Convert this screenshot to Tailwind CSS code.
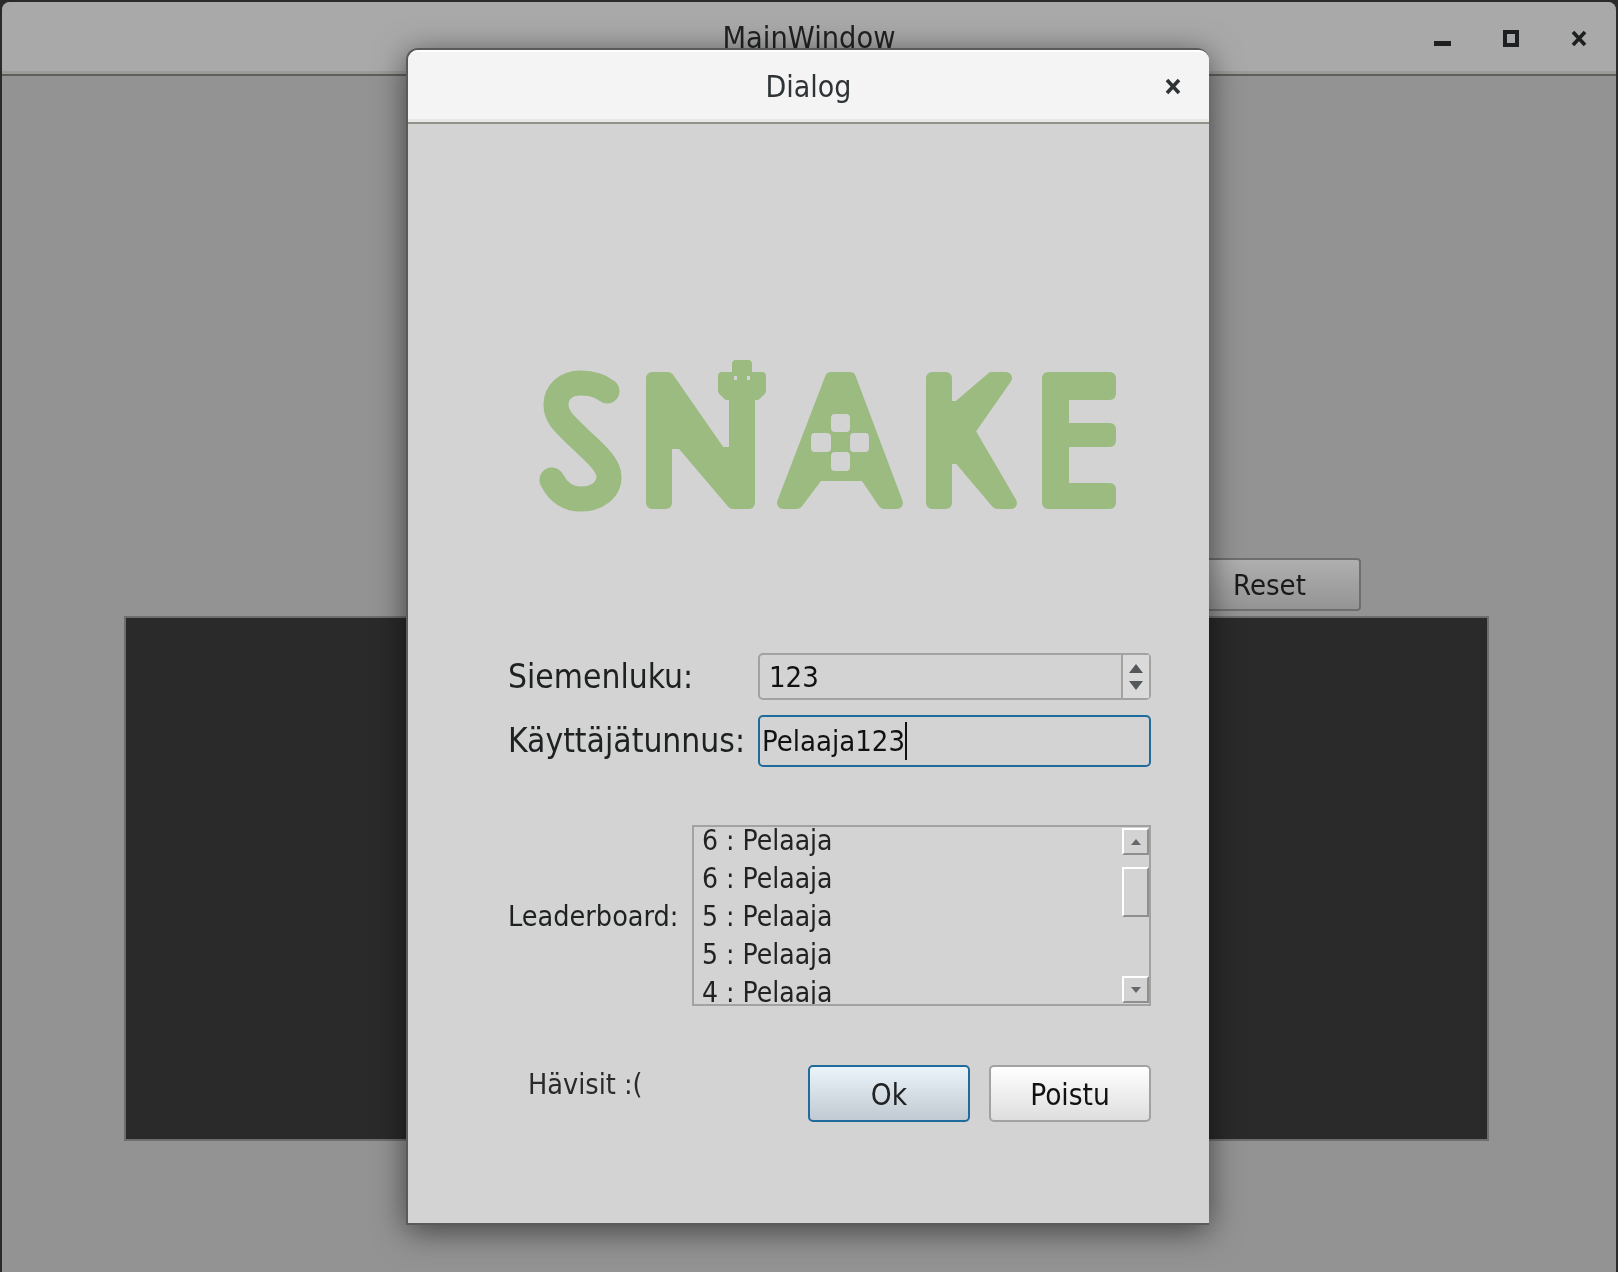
<!DOCTYPE html>
<html>
<head>
<meta charset="utf-8">
<title>Snake</title>
<script src="https://cdn.jsdelivr.net/npm/@tailwindcss/browser@4"></script>
</head>
<body class="bg-[#2a2a2a] font-['DejaVu_Sans',sans-serif] font-stretch-condensed overflow-hidden">
<div class="relative w-[1618px] h-[1272px] pl-[2px] pt-[2px] pr-[2px] overflow-hidden blur-[0.4px]">
  <!-- main window -->
  <div class="w-[1614px] h-[1270px] flex flex-col bg-[#939393] rounded-t-[8px] overflow-hidden">
    <div class="h-[72px] shrink-0 flex items-center justify-center relative bg-[#a9a9a9] border-b-[3px] border-b-[#9a9a96] shadow-[0_2px_0_#5e5e5a] text-[30.4px] text-[#1f2122]">
      <span class="pt-[2px]">MainWindow</span>
      <div class="absolute right-[29px] top-[28px] flex items-start gap-[52px]">
        <svg width="17" height="17" viewBox="0 0 17 17"><rect x="0" y="11" width="17" height="5" fill="#1d1f20"/></svg>
        <svg width="16" height="17" viewBox="0 0 16 17"><rect x="2" y="2" width="12" height="13" fill="none" stroke="#1d1f20" stroke-width="4"/></svg>
        <svg width="16" height="17" viewBox="0 0 16 17"><path d="M2 2 14 15M14 2 2 15" stroke="#1d1f20" stroke-width="3.6"/></svg>
      </div>
    </div>
    <div class="flex justify-end pt-[484px] pr-[255px]">
      <div class="w-[180px] h-[53px] flex items-center justify-center border-2 border-[#6e6e6e] rounded-[4px] bg-gradient-to-b from-[#afafaf] to-[#949494] text-[29px] text-[#1a1a1a] pr-[3px] pt-[3px]">Reset</div>
    </div>
    <div class="ml-[122px] mt-[5px] w-[1365px] h-[525px] bg-[#2a2a2a] border-2 border-[#6e6e6e]"></div>
  </div>

  <!-- dialog -->
  <div class="absolute left-[406px] top-[48px] w-[803px] h-[1177px] flex flex-col bg-[#d3d3d3] border-2 border-r-0 border-[#5a5a5a] rounded-t-[12px] shadow-[0_6px_32px_rgba(0,0,0,0.55)] text-[#1e2122]">
    <div class="h-[72px] shrink-0 relative flex items-center justify-center bg-[#f4f4f4] rounded-t-[10px] border-t-2 border-t-white border-b-[3px] border-b-[#e8e8e6] shadow-[0_2px_0_#91918a] text-[30px] text-[#2e3436]">
      <span class="pt-[1px]">Dialog</span>
      <svg class="absolute right-[28px] top-[26px]" width="16" height="17" viewBox="0 0 16 17"><path d="M2 2 14 15M14 2 2 15" stroke="#2e3436" stroke-width="3.6"/></svg>
    </div>

    <svg class="ml-[122px] mt-[233px] shrink-0" width="595" height="160" viewBox="530 355 595 160" fill="#9bbb80" stroke="#9bbb80" stroke-width="12" stroke-linejoin="round">
      <path d="M607 391C598 384 590 383 581 383C566 383 556 392 556 405C556 418 566 425 580 439C596 454 609 465 609 477C609 490 597 499 581 499C567 499 558 492 552 480" fill="none" stroke-width="25" stroke-linecap="round"/>
      <path d="M652 378H668L720 453H735V396H749V503H733L682 443H666V503H652Z"/>
      <path d="M736 364H748V376H762V391L757 396H727L722 391V376H736Z" stroke-width="8"/>
      <rect x="734" y="376" width="3" height="4" fill="#d3d3d3" stroke="none"/>
      <rect x="747" y="376" width="3" height="4" fill="#d3d3d3" stroke="none"/>
      <path d="M831 378H850L897 503H884L865 475H818L797 503H783Z"/>
      <g fill="#d3d3d3" stroke="none">
        <rect x="831" y="414" width="19" height="18" rx="4"/>
        <rect x="811" y="433" width="20" height="19" rx="4"/>
        <rect x="850" y="433" width="19" height="19" rx="4"/>
        <rect x="831" y="452" width="19" height="19" rx="4"/>
      </g>
      <path d="M932 378H946V407L958 407L992 378H1006L969 431L1011 503H997L959 458H946V503H932Z"/>
      <path d="M1048 378H1110V394H1063V429H1110V441H1063V489H1110V503H1048Z"/>
    </svg>

    <div class="flex flex-col pl-[100px] pr-[58px] mt-[138px]">
      <div class="flex items-center h-[47px]">
        <span class="w-[250px] shrink-0 text-[33.3px]">Siemenluku:</span>
        <div class="flex-1 h-full flex border-2 border-[#a2a2a0] rounded-[5px]">
          <span class="flex-1 pl-[9px] text-[29px] leading-[44px] text-[#111]">123</span>
          <div class="w-[28px] flex flex-col items-center justify-center gap-[8px] pr-[1px] border-l-2 border-l-[#a2a2a0] bg-[#dadada]">
            <svg width="14" height="9" viewBox="0 0 14 9"><path d="M7 0 14 9H0Z" fill="#55585a"/></svg>
            <svg width="14" height="9" viewBox="0 0 14 9"><path d="M0 0H14L7 9Z" fill="#55585a"/></svg>
          </div>
        </div>
      </div>
      <div class="flex items-center h-[52px] mt-[15px]">
        <span class="w-[250px] shrink-0 text-[33.3px]">Käyttäjätunnus:</span>
        <div class="flex-1 h-full flex items-center border-2 border-[#1f6b9c] rounded-[5px] pl-[2px] text-[29px] text-[#111]">
          <span class="border-r-2 border-r-[#111] leading-[38px] pr-0">Pelaaja123</span>
        </div>
      </div>

      <div class="flex items-center h-[181px] mt-[58px]">
        <span class="w-[184px] shrink-0 text-[28.5px] pt-[4px]">Leaderboard:</span>
        <div class="flex-1 h-full relative border-2 border-[#a2a2a0] overflow-hidden">
          <div class="pl-[8px] -mt-[5px] flex flex-col text-[28px] leading-[38px] text-[#222]">
            <span>6 : Pelaaja</span>
            <span>6 : Pelaaja</span>
            <span>5 : Pelaaja</span>
            <span>5 : Pelaaja</span>
            <span>4 : Pelaaja</span>
          </div>
          <div class="absolute right-0 top-0 bottom-0 w-[27px] flex flex-col justify-between py-[1px]">
            <div class="flex flex-col">
              <div class="h-[27px] flex items-center justify-center border-t-2 border-l-2 border-t-white border-l-white border-r-2 border-b-2 border-r-[#8f8f8f] border-b-[#8f8f8f]">
                <svg width="10" height="6" viewBox="0 0 10 6"><path d="M5 0 10 6H0Z" fill="#66696b"/></svg>
              </div>
              <div class="h-[50px] mt-[12px] border-t-2 border-l-2 border-t-white border-l-white border-r-2 border-b-2 border-r-[#8f8f8f] border-b-[#8f8f8f]"></div>
            </div>
            <div class="h-[27px] flex items-center justify-center border-t-2 border-l-2 border-t-white border-l-white border-r-2 border-b-2 border-r-[#8f8f8f] border-b-[#8f8f8f]">
              <svg width="10" height="6" viewBox="0 0 10 6"><path d="M0 0H10L5 6Z" fill="#66696b"/></svg>
            </div>
          </div>
        </div>
      </div>

      <div class="flex items-start h-[57px] mt-[59px]">
        <span class="pl-[20px] text-[28.5px] leading-[36px] mt-[2px] text-[#2a2a2a]">Hävisit :(</span>
        <div class="ml-auto flex gap-[19px] text-[29.5px]">
          <div class="w-[162px] h-[57px] flex items-center justify-center border-2 border-[#1f6b9c] rounded-[5px] bg-gradient-to-b from-[#ebf4fa] to-[#c1cad2] text-[#222] pt-[3px]">Ok</div>
          <div class="w-[162px] h-[57px] flex items-center justify-center border-2 border-[#a2a2a0] rounded-[5px] bg-gradient-to-b from-white to-[#dedede] text-[#111] pt-[3px]">Poistu</div>
        </div>
      </div>
    </div>
  </div>
</div>
</body>
</html>
